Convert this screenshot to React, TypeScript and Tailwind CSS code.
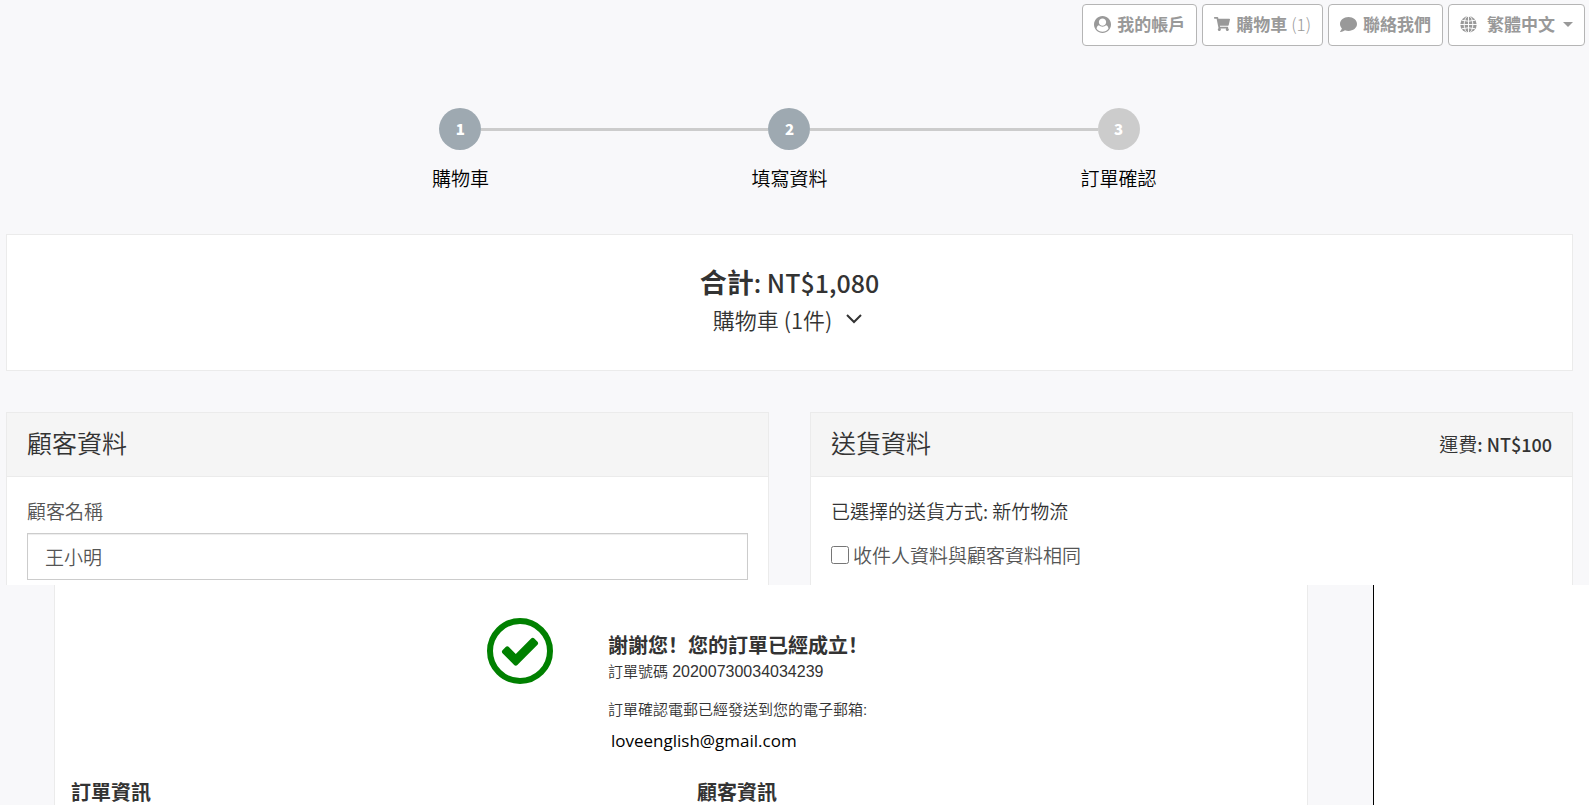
import { useState } from "react";
import { FaComment, FaShoppingCart } from "react-icons/fa";

const steps = [
    { id: 1, label: "購物車", done: true },
    { id: 2, label: "填寫資料", done: true },
    { id: 3, label: "訂單確認", done: false },
];

const UserIcon = () => (
    <svg viewBox="0 0 1792 1792" className="size-[17px] shrink-0" fill="currentColor" aria-hidden="true">
        <path d="M1523 1339q-22-155-87.5-257.5t-184.5-118.5q-67 74-159.5 115.5t-195.5 41.5-195.5-41.5-159.5-115.5q-119 16-184.5 118.5t-87.5 257.5q106 150 271 237.5t356 87.5 356-87.5 271-237.5zm-243-699q0-159-112.5-271.5t-271.5-112.5-271.5 112.5-112.5 271.5 112.5 271.5 271.5 112.5 271.5-112.5 112.5-271.5zm512 256q0 182-71 347.5t-190.5 286-285.5 191.5-349 71q-182 0-348-71t-286-191-191-286-71-348 71-348 191-286 286-191 348-71 348 71 286 191 191 286 71 348z" />
    </svg>
);

const GlobeIcon = () => (
    <svg viewBox="0 0 18 18" className="size-[17px] shrink-0" fill="none" aria-hidden="true">
        <circle cx="9" cy="9" r="8.7" fill="currentColor" />
        <g stroke="white" strokeWidth="1">
            <path d="M9 0v18M0 9h18M2 4.5q7 2 14 0M2 13.5q7-2 14 0" />
            <ellipse cx="9" cy="9" rx="4.6" ry="9" />
        </g>
    </svg>
);

const CheckIcon = () => (
    <svg viewBox="0 0 1792 1792" className="size-[42px] shrink-0" fill="currentColor" aria-hidden="true">
        <path d="M1671 566q0 40-28 68l-724 724-136 136q-28 28-68 28t-68-28l-136-136-362-362q-28-28-28-68t28-68l136-136q28-28 68-28t68 28l294 295 656-657q28-28 68-28t68 28l136 136q28 28 28 68z" />
    </svg>
);

const navButton = "flex items-center h-[42px] px-[11px] pb-0.5 bg-white border border-[#b5b5b5] rounded text-[#999] text-[17px] font-bold whitespace-nowrap";

export default function App() {
    const [name, setName] = useState("王小明");
    const [sameAsCustomer, setSameAsCustomer] = useState(false);

    return (
        <div className="min-h-screen flex flex-col bg-white text-[#333] font-['Noto_Sans_CJK_TC',sans-serif]">
            <div className="bg-[#f8f8fa]">
                <nav className="flex justify-end gap-[5px] pt-1 pr-1">
                    <button type="button" className={navButton}>
                        <UserIcon />
                        <span className="ml-1.5">我的帳戶</span>
                    </button>
                    <button type="button" className={navButton}>
                        <FaShoppingCart className="size-4" />
                        <span className="ml-1.5">購物車</span>
                        <span className="ml-1 font-light">(1)</span>
                    </button>
                    <button type="button" className={navButton}>
                        <FaComment className="size-[17px]" />
                        <span className="ml-1.5">聯絡我們</span>
                    </button>
                    <button type="button" className={navButton}>
                        <GlobeIcon />
                        <span className="ml-2.5">繁體中文</span>
                        <span className="ml-2 border-x-5 border-t-5 border-x-transparent border-t-[#999]"></span>
                    </button>
                </nav>

                <main className="pl-[6px] pr-4 pt-[62px]">
                    <ol className="grid grid-cols-3 w-[63%] mx-auto text-black">
                        {steps.map((step) => (
                            <li key={step.id} className="flex flex-col items-center">
                                <div className="flex items-center w-full">
                                    <span className={step.id === 1 ? "flex-1" : "flex-1 h-[3px] bg-[#ccc]"}></span>
                                    <span className={`flex items-center justify-center size-[42px] rounded-full text-white text-[15px] font-black ${step.done ? "bg-[#9ea9b1]" : "bg-[#ccc]"}`}>{step.id}</span>
                                    <span className={step.id === 3 ? "flex-1" : "flex-1 h-[3px] bg-[#ccc]"}></span>
                                </div>
                                <span className="mt-[14px] text-[19px] leading-7 font-[350]">{step.label}</span>
                            </li>
                        ))}
                    </ol>

                    <section className="flex flex-col items-center h-[137px] mt-[42px] pt-[27px] bg-white border border-[#ebebeb]">
                        <h2 className="text-[25px] leading-10 font-medium"><b className="text-[27px]">合計</b>: NT$1,080</h2>
                        <button type="button" className="flex items-center text-[22px] leading-[34px] font-[350]">
                            購物車 (1件)
                            <svg viewBox="0 0 16 10" className="w-4 ml-3.5 mr-1" fill="none" stroke="currentColor" strokeWidth="2" aria-hidden="true">
                                <path d="M1 1l7 7 7-7" />
                            </svg>
                        </button>
                    </section>

                    <div className="grid grid-cols-2 gap-[41px] mt-[41px]">
                        <section className="h-[173px] bg-white border border-b-0 border-[#ebebeb]">
                            <h3 className="flex items-center h-16 px-5 pb-1 bg-[#f5f5f5] border-b border-[#ebebeb] text-[25px] font-[350]">顧客資料</h3>
                            <div className="px-5 pt-5">
                                <label htmlFor="name" className="block text-[19px] leading-7 font-[350] text-[#555]">顧客名稱</label>
                                <input id="name" type="text" value={name} onChange={(e) => setName(e.target.value)} className="mt-2 w-full h-[47px] px-[17px] border border-[#ccc] bg-white text-[19px] font-[350] text-[#555] shadow-[inset_0_1px_1px_rgba(0,0,0,0.075)]" />
                            </div>
                        </section>
                        <section className="h-[173px] bg-white border border-b-0 border-[#ebebeb]">
                            <div className="flex items-center justify-between h-16 px-5 bg-[#f5f5f5] border-b border-[#ebebeb]">
                                <h3 className="pb-1 text-[25px] font-[350]">送貨資料</h3>
                                <p className="text-[18px] font-medium"><span className="text-[19px] font-[350]">運費</span>: NT$100</p>
                            </div>
                            <div className="px-5 pt-5 text-[19px] leading-7 font-[350]">
                                <p>已選擇的送貨方式: 新竹物流</p>
                                <label className="flex items-center mt-4 text-[#555]">
                                    <input type="checkbox" checked={sameAsCustomer} onChange={(e) => setSameAsCustomer(e.target.checked)} className="size-[18px] mr-1" />
                                    收件人資料與顧客資料相同
                                </label>
                            </div>
                        </section>
                    </div>
                </main>
            </div>

            {/* order confirmation */}
            <div className="flex flex-1">
                <div className="w-[54px] bg-[#f8f8fa]"></div>
                <section className="flex-1 px-4 border-x border-[#ebebeb]">
                    <div className="flex pl-[416px] pt-[33px]">
                        <div className="flex items-center justify-center size-[66px] rounded-full border-6 border-[#008000] text-[#008000]">
                            <CheckIcon />
                        </div>
                        <div className="ml-[55px] pt-[13px] text-[15px]">
                            <h2 className="text-[20px] leading-7 font-bold font-['Noto_Sans_CJK_SC',sans-serif]">謝謝您！您的訂單已經成立！</h2>
                            <p className="mt-px leading-6 font-[350] font-['Liberation_Sans','Noto_Sans_CJK_TC',sans-serif]">訂單號碼 <span className="text-base leading-6">20200730034034239</span></p>
                            <p className="mt-[14px] leading-6 font-[350] font-['Liberation_Sans','Noto_Sans_CJK_TC',sans-serif]">訂單確認電郵已經發送到您的電子郵箱:</p>
                            <p className="mt-[7px] pl-[3px] text-[17px] leading-6 text-black font-['Open_Sans',sans-serif]">loveenglish@gmail.com</p>
                        </div>
                    </div>
                    <div className="grid grid-cols-2 mt-[25px] text-[20px] leading-7 font-bold">
                        <h3>訂單資訊</h3>
                        <h3 className="pl-4">顧客資訊</h3>
                    </div>
                </section>
                <div className="w-[66px] bg-[#f8f8fa] border-r border-black"></div>
                <div className="w-[215px]"></div>
            </div>
        </div>
    );
}
